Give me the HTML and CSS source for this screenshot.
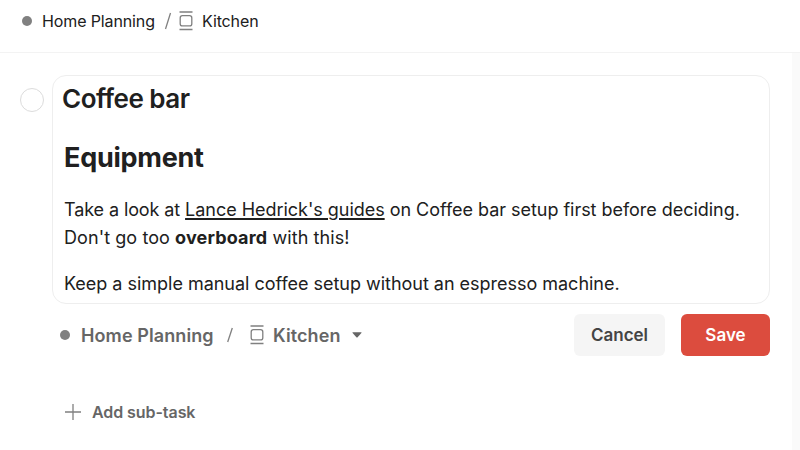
FILE: index.html
```
<!DOCTYPE html>
<html lang="en">
<head>
<meta charset="utf-8">
<title>Coffee bar</title>
<link rel="stylesheet" href="styles.css">
</head>
<body>
<header class="topbar">
  <span class="dot"></span>
  <span class="crumb crumb-project">Home Planning</span>
  <svg class="slash" width="8" height="20" viewBox="0 0 8 20"><path d="M6.5 2L1.5 18"/></svg>
  <svg class="section-icon" width="14" height="20" viewBox="0 0 14 20"><path d="M.5 1h13M.5 18.5h13"/><rect x="1.2" y="4.7" width="11.6" height="10.2" rx="2.2"/></svg>
  <span class="crumb crumb-section">Kitchen</span>
</header>
<div class="content">
  <main class="task">
    <button class="checkbox" aria-label="Complete task"></button>
    <div class="detail">
      <section class="editor">
        <h1>Coffee bar</h1>
        <h2>Equipment</h2>
        <p class="first"><span class="lead">Take a look at </span><a>Lance Hedrick's guides</a> on Coffee bar setup first before deciding.<br><span class="aside">Don't go too <b>overboard</b> with this!</span></p>
        <p class="last">Keep a simple manual coffee setup without an espresso machine.</p>
      </section>
      <div class="actions">
        <span class="dot"></span>
        <span class="pick pick-project">Home Planning</span>
        <svg class="slash" width="8" height="18" viewBox="0 0 8 18"><path d="M6.3 2L1.7 16"/></svg>
        <svg class="section-icon" width="14" height="20" viewBox="0 0 14 20"><path d="M.5 1h13M.5 18.5h13"/><rect x="1.2" y="4.7" width="11.6" height="10.2" rx="2.2"/></svg>
        <span class="pick">Kitchen</span>
        <svg class="caret" width="10" height="6" viewBox="0 0 10 6"><path d="M.8.3h8.4q.6 0 .2.6L5.6 5.2q-.6.6-1.2 0L.6.9Q.2.3.8.3z"/></svg>
        <button class="btn cancel">Cancel</button>
        <button class="btn save">Save</button>
      </div>
      <div class="add">
        <svg width="16" height="16" viewBox="0 0 16 16"><path d="M8 0v16M0 8h16"/></svg>
        <span class="addlabel">Add sub-task</span>
      </div>
    </div>
  </main>
  <aside class="side"></aside>
</div>
</body>
</html>
```
FILE: styles.css
```
* { box-sizing: border-box; }
body {
  margin: 0;
  width: 800px;
  height: 450px;
  overflow: hidden;
  display: flex;
  flex-direction: column;
  background: #fff;
  color: #202020;
  font-family: Inter, "Liberation Sans", sans-serif;
}
button { border: 0; padding: 0; font: inherit; }
svg { display: block; flex: none; fill: none; stroke: #808080; stroke-width: 1.3; }
.topbar {
  display: flex;
  align-items: center;
  height: 53px;
  padding: 0 0 10px 22px;
  border-bottom: 1px solid #f3f3f3;
  font-size: 16px;
  letter-spacing: -0.12px;
}
.dot { flex: none; width: 10px; height: 10px; border-radius: 50%; background: #808080; }
.crumb, .pick, .addlabel { white-space: nowrap; }
.crumb-project { width: 122px; margin-left: 10px; }
.topbar .section-icon { margin: 0 9px 0 7px; }
.content { display: flex; flex: 1; }
.side { width: 8px; background: #fafafa; }
.task { display: flex; flex: 1; padding: 22px 22px 0 20px; }
.checkbox {
  flex: none;
  width: 24px;
  height: 24px;
  margin: 13px 8px 0 0;
  border: 1.5px solid #dcdcdc;
  border-radius: 50%;
  background: #fff;
}
.detail { flex: 1; }
.editor {
  height: 229px;
  padding: 7px 11px;
  border: 1px solid #eee;
  border-radius: 14px;
}
h1, h2, p { margin: 0; white-space: nowrap; }
h1 { margin-left: -2px; font-size: 26px; line-height: 32px; font-weight: 600; letter-spacing: -0.5px; }
h2 { margin-top: 27px; font-size: 27px; line-height: 32px; font-weight: 700; letter-spacing: -0.25px; }
p { margin-top: 18px; font-size: 18px; line-height: 28px; letter-spacing: -0.03px; }
.last { letter-spacing: -0.02px; }
.first { margin-top: 22px; }
.lead { letter-spacing: -0.1px; }
.aside { letter-spacing: 0.08px; }
b { letter-spacing: 0.16px; }
a { text-decoration: underline; text-decoration-thickness: 1.5px; text-underline-offset: 2px; }
.actions {
  display: flex;
  align-items: center;
  height: 42px;
  margin-top: 10px;
  padding-left: 8px;
  color: #666;
  font-size: 18px;
  font-weight: 600;
  letter-spacing: 0.1px;
}
.pick-project { width: 145px; margin-left: 11px; }
.actions .section-icon { margin: 0 9px 0 16px; }
.caret { margin-left: 11px; fill: #666; stroke: none; }
.btn { height: 42px; border-radius: 6px; font-size: 17px; font-weight: 600; letter-spacing: 0; }
.cancel { width: 91px; margin-left: auto; background: #f5f5f5; color: #444; }
.save { width: 89px; margin-left: 16px; background: #dc4c3e; color: #fff; }
.add {
  display: flex;
  align-items: center;
  height: 24px;
  margin: 44px 0 0 13px;
  color: #666;
  font-size: 16px;
  font-weight: 600;
}
.addlabel { margin-left: 11px; letter-spacing: -0.07px; }
```
